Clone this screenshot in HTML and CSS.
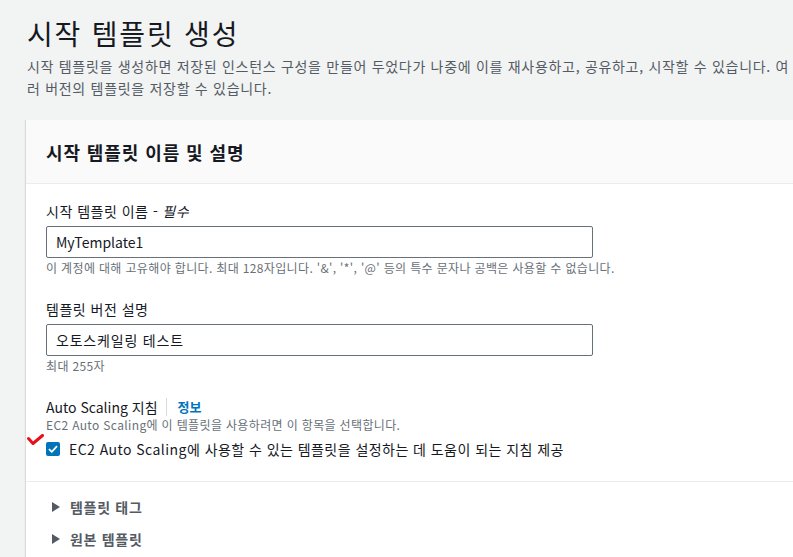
FILE: index.html
```html
<!DOCTYPE html>
<html lang="ko">
<head>
    <meta charset="UTF-8">
    <title>시작 템플릿 생성</title>
    <link rel="stylesheet" href="styles.css">
</head>
<body>
    <div class="page">
        <h1 class="title">시작 템플릿 생성</h1>
        <p class="intro">시작 템플릿을 생성하면 저장된 인스턴스 구성을 만들어 두었다가 나중에 이를 재사용하고, 공유하고, 시작할 수 있습니다. 여러 버전의 템플릿을 저장할 수 있습니다.</p>

        <div class="card">
            <div class="card-header">
                <h2>시작 템플릿 이름 및 설명</h2>
            </div>
            <div class="card-body">
                <div class="field">
                    <label class="field-label">시작 템플릿 이름 - <i>필수</i></label>
                    <input class="text-input" type="text" value="MyTemplate1">
                    <p class="hint">이 계정에 대해 고유해야 합니다. 최대 128자입니다. '&amp;', '*', '@' 등의 특수 문자나 공백은 사용할 수 없습니다.</p>
                </div>
                <div class="field">
                    <label class="field-label">템플릿 버전 설명</label>
                    <input class="text-input ko" type="text" value="오토스케일링 테스트">
                    <p class="hint">최대 255자</p>
                </div>
                <div class="field guide">
                    <div class="field-label">Auto Scaling 지침<span class="sep"></span><a class="info">정보</a></div>
                    <p class="hint top">EC2 Auto Scaling에 이 템플릿을 사용하려면 이 항목을 선택합니다.</p>
                    <label class="check">
                        <span class="box">
                            <svg width="10" height="8" viewBox="0 0 10 8"><path d="M1 4.2 L3.8 6.8 L9 1.2" fill="none" stroke="#fff" stroke-width="1.8"/></svg>
                        </span>
                        EC2 Auto Scaling에 사용할 수 있는 템플릿을 설정하는 데 도움이 되는 지침 제공
                    </label>
                    <svg class="mark" width="17" height="12" viewBox="0 0 17 12"><path d="M1.5 4.5 L6 9.5 L15.5 1.5" fill="none" stroke="#e8101b" stroke-width="3" stroke-linecap="round" stroke-linejoin="round"/></svg>
                </div>
            </div>
            <div class="expanders">
                <div class="expander"><span class="caret"></span>템플릿 태그</div>
                <div class="expander"><span class="caret"></span>원본 템플릿</div>
            </div>
        </div>
    </div>
</body>
</html>
```

FILE: styles.css
```css
body {
    margin: 0;
    background-color: #f2f3f3;
    font-family: "Noto Sans CJK KR", "Noto Sans", sans-serif;
    color: #16191f;
    overflow: hidden;
}
.page {
    width: 770px;
    padding: 12px 0 0 27px;
}
.title {
    font-size: 28px;
    font-weight: 400;
    line-height: 42px;
    letter-spacing: 1.8px;
    margin: 0;
}
.intro {
    font-size: 14px;
    line-height: 22px;
    letter-spacing: 0.7px;
    color: #545b64;
    margin: 1px 0 0;
}
.card {
    margin: 21px 0 0 -2px;
    width: 820px;
    background-color: white;
    border-left: 1px solid #d5dbdb;
    box-shadow: 0 1px 1px rgba(0, 0, 0, 0.1);
}
.card-header {
    background-color: #fafafa;
    border-bottom: 1px solid #eaeded;
    padding: 0 20px;
    height: 63px;
    display: flex;
    align-items: center;
}
.card-header h2 {
    font-size: 18px;
    font-weight: 700;
    letter-spacing: 0.9px;
    margin: 0;
}
.card-body {
    padding: 16px 20px 21px;
    border-bottom: 1px solid #eaeded;
}
.field {
    margin-bottom: 21px;
}
.field:last-child {
    margin-bottom: 0;
}
.field-label {
    display: flex;
    align-items: center;
    font-size: 14px;
    line-height: 22px;
    letter-spacing: 0.5px;
    margin-bottom: 4px;
}
.field-label i {
    margin-left: 4px;
}
.text-input {
    display: block;
    box-sizing: border-box;
    width: 547px;
    height: 32px;
    border: 1px solid #687078;
    border-radius: 2px;
    padding: 0 9px;
    font-family: inherit;
    font-size: 14px;
    color: #16191f;
}
.text-input.ko {
    letter-spacing: 0.8px;
}
.hint {
    font-size: 12px;
    line-height: 18px;
    letter-spacing: 0.35px;
    color: #687078;
    margin: 1px 0 0;
}
.guide {
    position: relative;
    padding-top: 1px;
}
.guide .field-label {
    line-height: 20px;
    letter-spacing: 0;
    margin-bottom: 0;
}
.hint.top {
    line-height: 16px;
    margin: 0;
}
.sep {
    display: inline-block;
    width: 1px;
    height: 18px;
    background-color: #d5dbdb;
    margin: 0 11px 0 8px;
}
.info {
    font-size: 13px;
    font-weight: 700;
    color: #0073bb;
}
.check {
    display: flex;
    align-items: center;
    font-size: 14px;
    line-height: 22px;
    letter-spacing: 0.45px;
    margin-top: 5px;
}
.box {
    width: 14px;
    height: 14px;
    border-radius: 2px;
    background-color: #0073bb;
    display: flex;
    align-items: center;
    justify-content: center;
    margin-right: 9px;
}
.mark {
    position: absolute;
    left: -19px;
    top: 38px;
}
.expanders {
    padding: 14px 20px;
}
.expander {
    display: flex;
    align-items: center;
    font-size: 14px;
    font-weight: 700;
    letter-spacing: 0.7px;
    color: #545b64;
    line-height: 22px;
    margin-bottom: 10px;
}
.caret {
    width: 0;
    height: 0;
    border-top: 5px solid transparent;
    border-bottom: 5px solid transparent;
    border-left: 8px solid #545b64;
    margin: 0 10px 0 6px;
}
```
